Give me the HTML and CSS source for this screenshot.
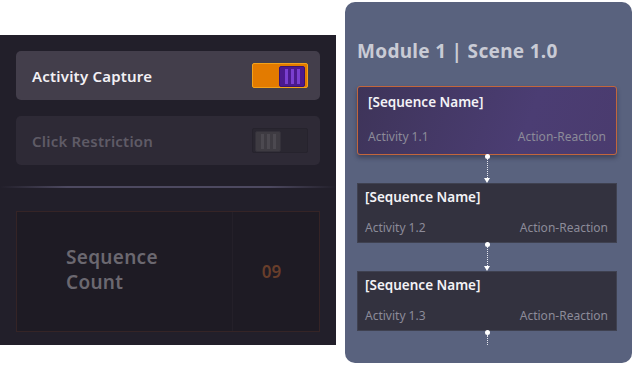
FILE: index.html
```html
<!DOCTYPE html>
<html lang="en">
<head>
  <meta charset="UTF-8" />
  <title>Scene Settings</title>
  <link rel="stylesheet" href="styles.css">
</head>
<body>

  <section class="settings">
    <div class="option active">
      <span class="option-label">Activity Capture</span>
      <div class="toggle on"><div class="thumb"><i></i><i></i><i></i></div></div>
    </div>
    <div class="option">
      <span class="option-label">Click Restriction</span>
      <div class="toggle"><div class="thumb"><i></i><i></i><i></i></div></div>
    </div>

    <hr class="divider">

    <div class="count-box">
      <div class="count-label">Sequence<br>Count</div>
      <div class="count-value">09</div>
    </div>
  </section>

  <section class="scene">
    <h2 class="scene-title">Module 1 | Scene 1.0</h2>

    <div class="seq selected">
      <div class="seq-name">[Sequence Name]</div>
      <div class="seq-meta"><span>Activity 1.1</span><span>Action-Reaction</span></div>
    </div>
    <div class="link"><span class="dot"></span><span class="dash"></span><span class="arrow"></span></div>
    <div class="seq">
      <div class="seq-name">[Sequence Name]</div>
      <div class="seq-meta"><span>Activity 1.2</span><span>Action-Reaction</span></div>
    </div>
    <div class="link"><span class="dot"></span><span class="dash"></span><span class="arrow"></span></div>
    <div class="seq">
      <div class="seq-name">[Sequence Name]</div>
      <div class="seq-meta"><span>Activity 1.3</span><span>Action-Reaction</span></div>
    </div>
    <div class="link end"><span class="dot"></span><span class="dash"></span></div>
  </section>

</body>
</html>
```

FILE: styles.css
```css
/* scene settings + sequence list */
body {
  margin: 0;
  background: #ffffff;
  font-family: "Noto Sans", "Open Sans", sans-serif;
  display: flex;
  align-items: flex-start;
}
.settings {
  margin-top: 35px;
  width: 336px;
  height: 310px;
  background: #221f2a;
  padding: 16px 16px 0 16px;
  box-sizing: border-box;
  display: flex;
  flex-direction: column;
}
.option {
  height: 49px;
  border-radius: 5px;
  background: #2e2a36;
  display: flex;
  align-items: center;
  justify-content: space-between;
  padding: 0 12px 0 16px;
  margin-bottom: 16px;
}
.option.active {
  background: #433e4b;
}
.option-label {
  font-size: 15px;
  font-weight: 600;
  color: #5f5b66;
  letter-spacing: 0.2px;
}
.option.active .option-label {
  color: #f2f0f4;
}
.toggle {
  width: 56px;
  height: 25px;
  box-sizing: border-box;
  border: 1px solid #26232d;
  background: #2a2731;
  border-radius: 2px;
  padding: 2px;
  display: flex;
}
.toggle .thumb {
  width: 24px;
  height: 15px;
  background: #3e3b42;
  border: 1px solid #34313a;
  border-radius: 2px;
  display: flex;
  justify-content: center;
  gap: 3px;
  padding: 2px 0;
  box-sizing: content-box;
}
.toggle .thumb i {
  width: 3px;
  background: #4c4950;
}
.toggle.on {
  background: #e37b00;
  border-color: #f3a21a;
  justify-content: flex-end;
}
.toggle.on .thumb {
  background: #4b1a8e;
  border-color: #3a1270;
}
.toggle.on .thumb i {
  background: #7a3fd0;
}
.divider {
  margin: 5px -16px 23px -16px;
  height: 2px;
  border: 0;
  background: linear-gradient(90deg, rgba(90, 85, 110, 0) 0%, #4d4960 20%, #4d4960 80%, rgba(90, 85, 110, 0) 100%);
}
.count-box {
  height: 119px;
  border: 1px solid #352426;
  background: #1e1b24;
  display: flex;
}
.count-label {
  width: 216px;
  box-sizing: border-box;
  border-right: 1px solid #242029;
  padding-left: 49px;
  padding-bottom: 3px;
  font-size: 19px;
  line-height: 25px;
  font-weight: 600;
  color: #6b6870;
  display: flex;
  align-items: center;
  letter-spacing: 0.3px;
}
.count-value {
  flex: 1;
  display: flex;
  align-items: center;
  justify-content: center;
  padding-right: 9px;
  font-size: 17px;
  font-weight: 600;
  color: #683e2b;
}
.scene {
  margin: 2px 0 0 9px;
  width: 287px;
  height: 361px;
  background: #59627e;
  border-radius: 10px;
  padding: 0 15px 0 12px;
  box-sizing: border-box;
  display: flex;
  flex-direction: column;
}
.scene-title {
  margin: 37px 0 0 0;
  height: 47px;
  font-size: 19px;
  font-weight: 700;
  color: #c9cbd5;
  letter-spacing: 0.3px;
  line-height: 24px;
}
.seq {
  height: 60px;
  box-sizing: border-box;
  background: #33323f;
  border: 1px solid #3f4150;
  padding: 4px 8px 6px 7px;
  display: flex;
  flex-direction: column;
  justify-content: space-between;
}
.seq.selected {
  height: 69px;
  border: 1px solid #c2663c;
  border-radius: 3px;
  background: linear-gradient(110deg, #3e3459 0%, #4b3d73 65%, #4a3b6e 100%);
  box-shadow: 0 3px 4px rgba(30, 30, 50, 0.45);
  padding: 6px 10px 9px 10px;
}
.seq-name {
  font-size: 13.5px;
  font-weight: 600;
  color: #f3f2f6;
}
.seq-meta {
  display: flex;
  justify-content: space-between;
  font-size: 12px;
  color: #8c8b99;
}
.link {
  height: 28px;
  display: flex;
  flex-direction: column;
  align-items: center;
}
.link.end {
  height: 14px;
}
.dot {
  flex: none;
  width: 5px;
  height: 5px;
  border-radius: 50%;
  background: #ffffff;
  margin-top: -1px;
}
.dash {
  flex: 1;
  width: 0;
  border-left: 1px dotted #e8e8f0;
}
.arrow {
  flex: none;
  width: 0;
  height: 0;
  border-left: 3px solid transparent;
  border-right: 3px solid transparent;
  border-top: 5px solid #ffffff;
}
```
